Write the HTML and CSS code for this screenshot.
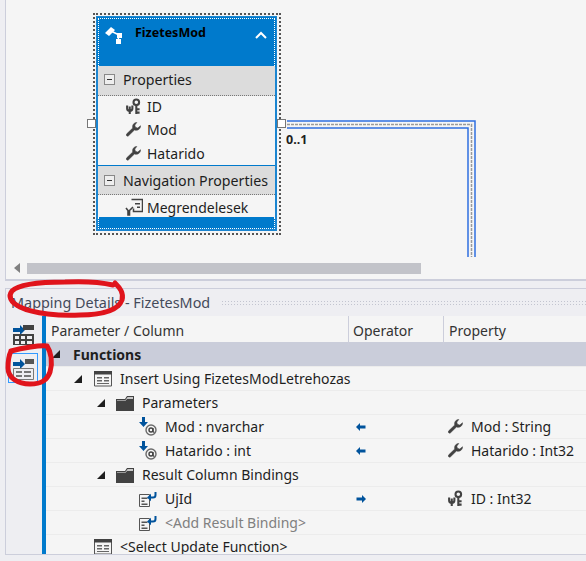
FILE: index.html
```html
<!DOCTYPE html>
<html lang="en">
<head>
	<title>Mapping Details - FizetesMod</title>
	<link rel="stylesheet" href="styles.css">
</head>
<body>
	<svg class="defs" width="0" height="0">
		<symbol id="i-key" viewBox="0 0 16 18">
			<circle cx="11" cy="4.5" r="3" fill="none" stroke="#424242" stroke-width="2.2"/>
			<path d="M11 7.5v9.500M11 12h3.500M11 15.500h3.500" fill="none" stroke="#424242" stroke-width="2.2"/>
			<path d="M4 9v8M1.200 8v3q0 2.500 2.800 2.500t2.800-2.500V8" fill="none" stroke="#424242" stroke-width="2.2"/>
		</symbol>
		<symbol id="i-wrench" viewBox="0 0 16 16">
			<path d="M11.500.5A4.500 4.500 0 0 0 7 5q0 .8.2 1.400L.8 12.600q-1 1-.1 2 1 1 2 .1L9 8.500q.8.300 1.600.3A4.500 4.500 0 0 0 15.500 4l-3 2.500-2.500-.8-.6-2.400z" fill="#424242" stroke="#424242" stroke-width=".6"/>
		</symbol>
		<symbol id="i-nav" viewBox="0 0 18 18">
			<path d="M6.500 1.500h11v12h-9v-3" fill="none" stroke="#424242" stroke-width="1.500"/>
			<path d="M10 5h5v1.500h-5zM12 8.500h3V10h-3z" fill="#424242"/>
			<path d="M1 10l2 2.500V17h1.500v-4.500L8 9" fill="none" stroke="#424242" stroke-width="1.600"/>
		</symbol>
		<symbol id="i-func" viewBox="0 0 18 16">
			<path d="M.5 1h17v14H.500z" fill="#f5f5f5" stroke="#555"/>
			<path d="M0 0h18v3.500H0z" fill="#424242"/>
			<path d="M3 6h5v1.500H3zM10 6h5v1.500h-5zM3 9h5v1.500H3zM10 9h5v1.500h-5zM3 12h12v1H3z" fill="#666"/>
		</symbol>
		<symbol id="i-folder" viewBox="0 0 18 16">
			<path d="M0 4 0 16h18V1h-7L9 4z" fill="#424242"/>
			<path d="M1 5h8.500l2-2.800H17v1.600H11L9.800 5.600H1z" fill="#f5f5f5"/>
		</symbol>
		<symbol id="i-param" viewBox="0 0 18 20">
			<path d="M3 0h3v5h3L4.500 10 0 5h3z" fill="#00539c"/>
			<circle cx="12" cy="13" r="5" fill="none" stroke="#6a6a6a" stroke-width="1.400"/>
			<circle cx="12" cy="13" r="2" fill="none" stroke="#424242" stroke-width="1.400"/>
			<path d="M14 11v3q0 1.500 1.500 1" fill="none" stroke="#424242" stroke-width="1.200"/>
		</symbol>
		<symbol id="i-bind" viewBox="0 0 18 16">
			<path d="M.5 3.500h10v12H.500z" fill="#f5f5f5" stroke="#555"/>
			<path d="M2.500 6.500h6V8h-6zM2.500 9.500h3V11h-3zM2.500 12.500h6V14h-6z" fill="#555"/>
			<path d="M16.500 1v3q0 2.500-2.500 2.500H10" fill="none" stroke="#00539c" stroke-width="2"/>
			<path d="M12 2.800 8 6.500l4 3.700z" fill="#00539c"/>
		</symbol>
		<symbol id="i-left" viewBox="0 0 10 8">
			<path d="M0 4l4-4v2.500h5.500v3H4V8z" fill="#00539c"/>
		</symbol>
		<symbol id="i-right" viewBox="0 0 10 8">
			<path d="M10 4 6 0v2.500H.5v3H6V8z" fill="#00539c"/>
		</symbol>
	</svg>

	<section class="design-panel">
		<div class="canvas">
			<svg class="connector" width="220" height="150">
				<path d="M0 1H188V138" class="wire"/>
				<path d="M0 8H181V138" class="wire"/>
				<path d="M0 4.500H184.500V138" class="wire-mid"/>
			</svg>
			<div class="selection">
				<span class="handle handle-left"></span>
				<span class="handle handle-right"></span>
				<div class="entity">
					<div class="entity-head">
						<svg class="entity-icon" width="18" height="17" viewBox="0 0 18 17">
							<path d="M0 6 6 0l4 3-6 6zM12 6h5v5h-5zM11 12h5v5h-5z" fill="#fff"/>
							<path d="M6 4l8 4-1 6" fill="none" stroke="#fff" stroke-width="1.500"/>
						</svg>
						<span class="entity-name">FizetesMod</span>
						<svg class="chevron" width="12" height="8" viewBox="0 0 12 8">
							<path d="M1 7l5-5 5 5" fill="none" stroke="#fff" stroke-width="2"/>
						</svg>
					</div>
					<div class="section-head"><span class="minus"></span>Properties</div>
					<div class="prop-row prop-id"><svg class="prop-icon" width="15" height="17"><use href="#i-key"/></svg>ID</div>
					<div class="prop-row"><svg class="prop-icon" width="15" height="15"><use href="#i-wrench"/></svg>Mod</div>
					<div class="prop-row prop-last"><svg class="prop-icon" width="15" height="15"><use href="#i-wrench"/></svg>Hatarido</div>
					<div class="section-head section-nav"><span class="minus"></span>Navigation Properties</div>
					<div class="prop-row prop-nav"><svg class="prop-icon prop-icon-nav" width="18" height="18"><use href="#i-nav"/></svg>Megrendelesek</div>
					<div class="entity-foot"></div>
				</div>
			</div>
			<span class="mult">0..1</span>
		</div>
		<div class="hscroll">
			<span class="arrow-left"></span>
			<span class="thumb"></span>
		</div>
	</section>

	<section class="mapping-panel">
		<div class="title-bar">
			<span>Mapping Details - FizetesMod</span>
			<span class="grip"></span>
		</div>
		<div class="mapping-body">
			<div class="toolbar">
				<span class="tool">
					<svg width="24" height="23" viewBox="0 0 24 23">
						<path d="M2 5h7V2l5 5-5 5V9H2z" fill="#00539c"/>
						<path d="M12 2h11v5H12z" fill="#424242"/>
						<path d="M2 11h21v11H2z" fill="#424242"/>
						<path d="M4 13h4v3H4zM10 13h4v3h-4zM16 13h5v3h-5zM4 18h4v3H4zM10 18h4v3h-4zM16 18h5v3h-5z" fill="#eeeef2"/>
					</svg>
				</span>
				<span class="tool tool-active">
					<svg width="24" height="23" viewBox="0 0 24 23">
						<path d="M2 5h7V2l5 5-5 5V9H2z" fill="#00539c"/>
						<path d="M14 2h9v5h-9z" fill="#555"/>
						<path d="M2.500 11.500h20v11h-20z" fill="#eeeef2" stroke="#777"/>
						<path d="M5 14h6v2H5zM13 14h7v2h-7zM5 18h6v2H5zM13 18h7v2h-7z" fill="#777"/>
					</svg>
				</span>
			</div>
			<div class="grid">
				<div class="grid-head">
					<span class="col-name">Parameter / Column</span>
					<span class="col-op">Operator</span>
					<span class="col-prop">Property</span>
				</div>
				<div class="row row-group"><span class="cell-name lv0"><i class="twist"></i><b>Functions</b></span></div>
				<div class="row">
					<span class="cell-name lv1"><i class="twist"></i><svg class="ico-func" width="18" height="16"><use href="#i-func"/></svg>Insert Using FizetesModLetrehozas</span>
				</div>
				<div class="row">
					<span class="cell-name lv2"><i class="twist"></i><svg class="ico-folder" width="18" height="16"><use href="#i-folder"/></svg>Parameters</span>
				</div>
				<div class="row">
					<span class="cell-name lv3"><svg class="ico-leaf" width="18" height="20"><use href="#i-param"/></svg>Mod : nvarchar</span>
					<span class="cell-op"><svg width="10" height="8"><use href="#i-left"/></svg></span>
					<span class="cell-prop"><svg class="ico-prop" width="15" height="15"><use href="#i-wrench"/></svg>Mod : String</span>
				</div>
				<div class="row">
					<span class="cell-name lv3"><svg class="ico-leaf" width="18" height="20"><use href="#i-param"/></svg>Hatarido : int</span>
					<span class="cell-op"><svg width="10" height="8"><use href="#i-left"/></svg></span>
					<span class="cell-prop"><svg class="ico-prop" width="15" height="15"><use href="#i-wrench"/></svg>Hatarido : Int32</span>
				</div>
				<div class="row">
					<span class="cell-name lv2"><i class="twist"></i><svg class="ico-folder" width="18" height="16"><use href="#i-folder"/></svg>Result Column Bindings</span>
				</div>
				<div class="row">
					<span class="cell-name lv3"><svg class="ico-leaf" width="18" height="16"><use href="#i-bind"/></svg>UjId</span>
					<span class="cell-op"><svg width="10" height="8"><use href="#i-right"/></svg></span>
					<span class="cell-prop"><svg class="ico-prop" width="15" height="17"><use href="#i-key"/></svg>ID : Int32</span>
				</div>
				<div class="row">
					<span class="cell-name lv3 muted"><svg class="ico-leaf" width="18" height="16"><use href="#i-bind"/></svg>&lt;Add Result Binding&gt;</span>
				</div>
				<div class="row">
					<span class="cell-name lv4"><svg class="ico-func" width="18" height="16"><use href="#i-func"/></svg>&lt;Select Update Function&gt;</span>
				</div>
			</div>
		</div>
	</section>

	<!-- red marker scribbles from whoever took the screenshot -->
	<svg class="scribble" width="586" height="561">
		<path d="M115 283C120 288 124 293 122 300C118 311 100 315 80 315C60 316 34 314 20 307C10 302 8 296 12 291C20 283 45 282 65 282C85 281 100 282 113 285"/>
		<path d="M11 351C22 348 40 345 47 346C51 352 53 362 50 372C47 380 42 384 30 384C18 384 8 378 8 368C8 360 9 355 11 351"/>
	</svg>
</body>
</html>
```

FILE: styles.css
```css
html, body {
	margin: 0;
	height: 561px;
	overflow: hidden;
}

body {
	background-color: #eeeef2;
	color: #1e1e1e;
	font-family: "Noto Sans", "Open Sans", sans-serif;
	font-size: 14px;
}

.defs { position: absolute; }

/* Designer surface */
.design-panel {
	height: 279px;
	margin-left: 5px;
	border-left: 1px solid #cccedb;
	border-bottom: 2px solid #cccedb;
	background-color: #f5f5f5;
	display: flex;
	flex-direction: column;
}

.canvas {
	position: relative;
	height: 257px;
	overflow: hidden;
}

.hscroll {
	display: flex;
	align-items: center;
	height: 22px;
	padding-left: 8px;
	box-sizing: border-box;
}

.arrow-left {
	width: 0;
	height: 0;
	border: 5px solid transparent;
	border-left-width: 0;
	border-right: 6px solid #808080;
	margin-right: 7px;
}

.thumb {
	width: 394px;
	height: 11px;
	background-color: #c2c3c9;
}

.connector {
	position: absolute;
	left: 281px;
	top: 120px;
}

.wire {
	fill: none;
	stroke: #2f6fe0;
	stroke-width: 1.5;
}

.wire-mid {
	fill: none;
	stroke: #9a9a9a;
	stroke-width: 1.5;
	stroke-dasharray: 3 1;
}

.selection {
	position: absolute;
	left: 87px;
	top: 13px;
	width: 182px;
	height: 216px;
	padding: 1px;
	border: 2px dotted #555;
}

.handle {
	position: absolute;
	top: 104px;
	width: 7px;
	height: 7px;
	background-color: #fff;
	border: 1px solid #777;
	z-index: 2;
}

.handle-left { left: -8px; }
.handle-right { right: -7px; }

.entity {
	height: 211px;
	margin-right: 1px;
	border: 2px solid #1c86d1;
	display: flex;
	flex-direction: column;
	background-color: #f5f5f5;
}

.entity-head {
	flex: none;
	height: 48px;
	padding: 6px 0 0 6px;
	background-color: #007acc;
	border: 1px dotted #fff;
	border-bottom: 0;
	box-sizing: border-box;
	display: flex;
	align-items: flex-start;
	box-shadow: 0 0 0 1px #007acc;
}

.entity-icon { margin-top: 2px; }

.entity-name {
	margin-left: 12px;
	font-weight: bold;
	font-size: 12.500px;
	line-height: 16px;
	color: #000;
	flex: 1;
}

.chevron {
	margin: 6px 7px 0 0;
}

.section-head {
	flex: none;
	height: 27px;
	padding-bottom: 2px;
	padding-left: 6px;
	background-color: #dcdcdc;
	border-bottom: 1px dotted #777;
	display: flex;
	align-items: center;
	font-size: 14.200px;
}

.section-nav {
	padding-top: 1px;
	padding-bottom: 0;
	height: 27px;
	border-top: 1px solid #007acc;
}

.minus {
	width: 9px;
	height: 9px;
	margin-right: 8px;
	background: linear-gradient(#333, #333) center / 5px 1px no-repeat #eee;
	border: 1px solid #888;
}

.prop-row {
	flex: none;
	height: 24px;
	padding-left: 28px;
	box-sizing: border-box;
	display: flex;
	align-items: center;
	font-size: 14px;
}

.prop-row.prop-id { height: 21px; }
.prop-row.prop-last { height: 24px; padding-top: 1px; }
.prop-row.prop-nav { height: 22px; padding-top: 2px; }

.prop-icon {
	margin-right: 6px;
	flex: none;
}

.prop-icon-nav {
	margin-left: -1px;
	margin-right: 4px;
}

.entity-foot {
	flex: 1;
	background-color: #007acc;
	border: 1px dotted #fff;
	border-top: 0;
}

.mult {
	position: absolute;
	left: 280px;
	top: 132px;
	font-size: 12.500px;
	font-weight: bold;
	line-height: 16px;
}

/* Mapping details */
.mapping-panel {
	height: 265px;
	margin: 7px 0 0 5px;
	border: 1px solid #cccedb;
	border-right: 0;
	display: flex;
	flex-direction: column;
}

.title-bar {
	flex: none;
	height: 27px;
	padding-left: 5px;
	display: flex;
	align-items: center;
	color: #444a5a;
	font-size: 14.400px;
}

.grip {
	flex: 1;
	height: 5px;
	margin: 0 0 1px 11px;
	background-image: radial-gradient(#c3c5d0 1px, transparent 1px);
	background-size: 3px 3px;
}

.mapping-body {
	flex: 1;
	display: flex;
	min-height: 0;
}

.toolbar {
	width: 36px;
	flex: none;
	padding: 3px 0 0 2px;
	box-sizing: border-box;
	display: flex;
	flex-direction: column;
	align-items: flex-start;
	gap: 4px;
}

.tool {
	width: 30px;
	height: 30px;
	display: flex;
	align-items: center;
	justify-content: center;
	border: 1px solid transparent;
	box-sizing: border-box;
}

.tool-active {
	border-color: #3399ff;
}

.grid {
	flex: 1;
	border-left: 4px solid #007acc;
	background-color: #f5f5f5;
	overflow: hidden;
}

.grid-head {
	height: 26px;
	display: grid;
	grid-template-columns: 302px 95px 1fr;
	line-height: 29px;
	color: #333;
}

.col-name { padding-left: 5px; }

.col-op { border-left: 1px solid #cccedb; padding-left: 4px; }
.col-prop { border-left: 1px solid #cccedb; padding-left: 5px; }

.row {
	height: 24px;
	box-sizing: border-box;
	display: grid;
	grid-template-columns: 302px 95px 1fr;
	align-items: center;
	border-top: 1px solid #ececec;
	white-space: nowrap;
}

.row-group {
	background-color: #cacdda;
	border-top: 0;
}

.cell-name {
	display: flex;
	align-items: center;
	grid-column: 1;
}

.cell-op {
	grid-column: 2;
	display: flex;
	padding-left: 8px;
}

.cell-prop {
	grid-column: 3;
	display: flex;
	align-items: center;
	padding-left: 5px;
}

.lv0 { padding-left: 6px; }
.lv1 { padding-left: 28px; }
.lv2 { padding-left: 51px; }
.lv3 { padding-left: 93px; }
.lv4 { padding-left: 48px; }

.twist {
	width: 0;
	height: 0;
	border-style: solid;
	border-width: 0 0 8px 8px;
	border-color: transparent transparent #1e1e1e transparent;
	flex: none;
}

.lv0 .twist { margin-right: 13px; }
.lv1 .twist { margin-right: 12px; }
.lv2 .twist { margin-right: 11px; }

.ico-func { margin-right: 8px; flex: none; }
.ico-folder { margin-right: 8px; flex: none; }
.ico-leaf { margin-right: 8px; flex: none; }
.ico-prop { margin-right: 8px; flex: none; }

.muted { color: #808080; }

.scribble {
	position: absolute;
	left: 0;
	top: 0;
	fill: none;
	stroke: #e0141c;
	stroke-width: 5;
	stroke-linecap: round;
	pointer-events: none;
}
```
